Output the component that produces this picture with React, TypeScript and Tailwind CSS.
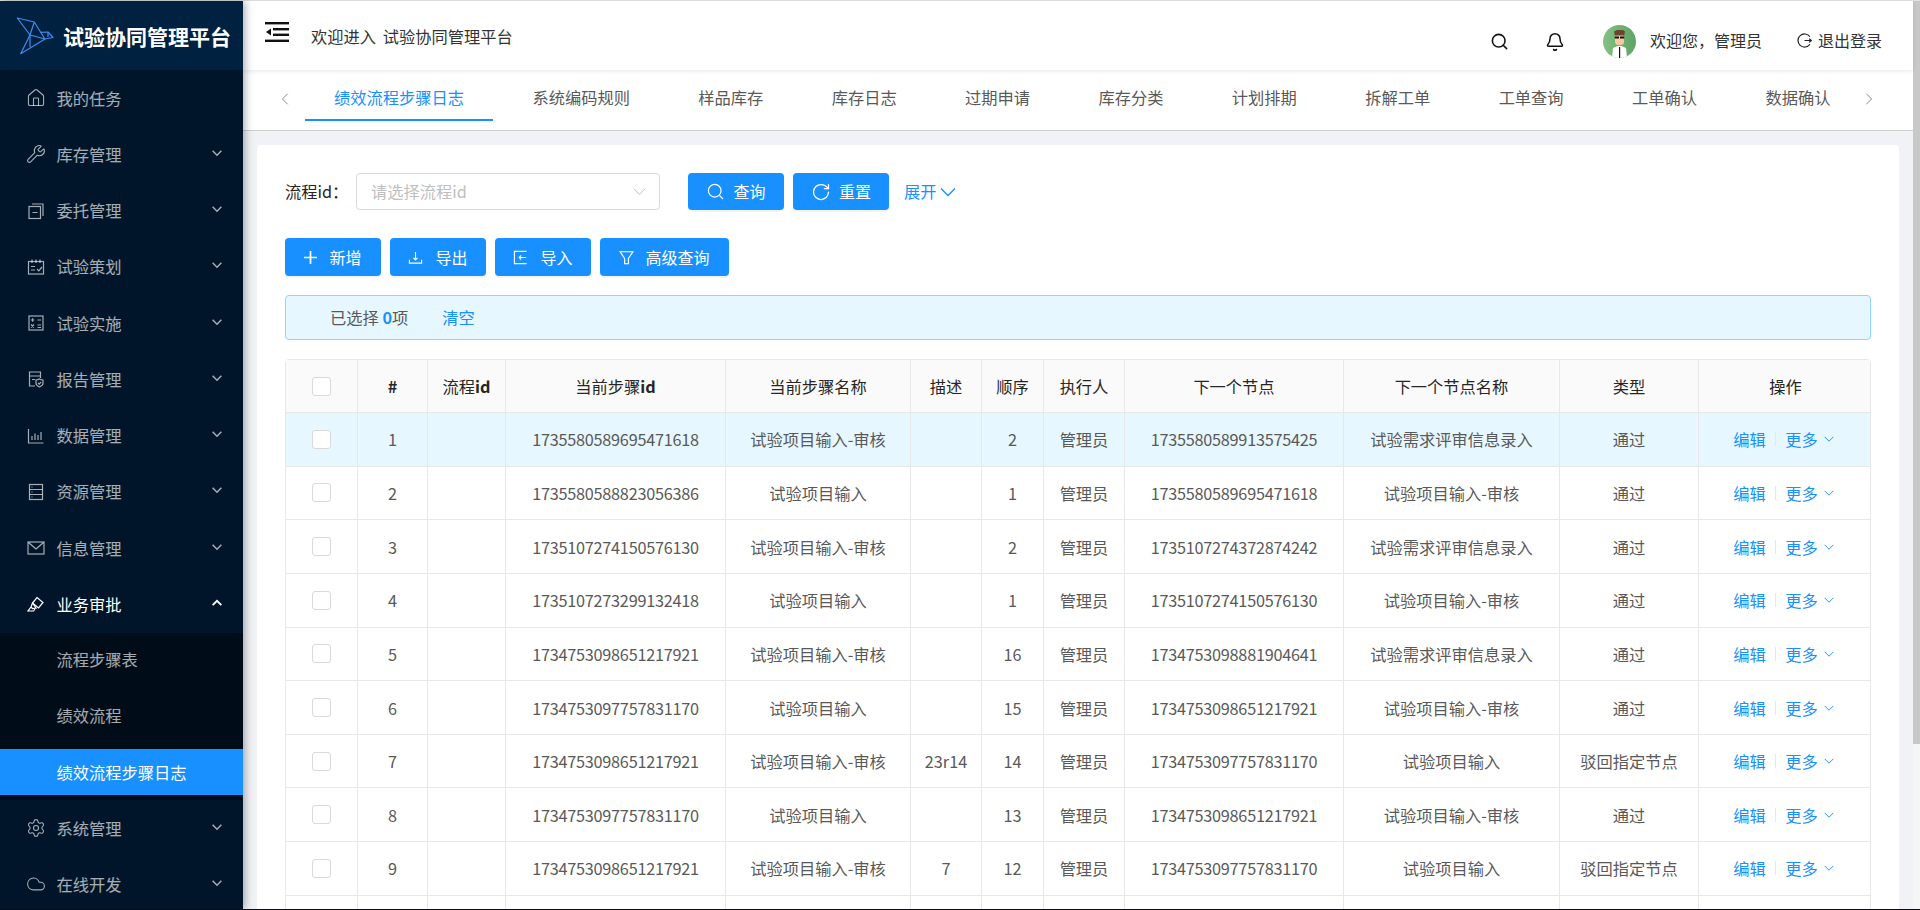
import React from "react";
import { RotateCw, Settings, Cloud, Bell, House, Wrench, Search } from "lucide-react";

type IconP = { className?: string };
const S = ({ children, className }: { children: React.ReactNode; className?: string }) => (
  <svg viewBox="0 0 18 18" fill="none" stroke="currentColor" strokeWidth="1.2" className={className}>
    {children}
  </svg>
);

const Chev = ({ className, d = "M1 4.5l7 7 7-7", sw = 1.2 }: { className?: string; d?: string; sw?: number }) => (
  <svg viewBox="0 0 16 16" fill="none" stroke="currentColor" strokeWidth={sw} className={`shrink-0 ${className ?? ""}`}>
    <path d={d} />
  </svg>
);
const UP = "M1 11.5l7-7 7 7";
const LEFT = "M11.5 1l-7 7 7 7";
const RIGHT = "M4.5 1l7 7-7 7";

const CopyMinusI = ({ className }: IconP) => (
  <S className={className}>
    <rect x="2" y="4.5" width="11.5" height="12" />
    <path d="M5 2h11v12M5.5 10.5h5" />
  </S>
);
const PlanI = ({ className }: IconP) => (
  <S className={className}>
    <rect x="1.5" y="3.5" width="15" height="12.5" />
    <path d="M5 1.5v3.5M9 1.5v3.5M13 1.5v3.5M4 8.5h4M4 12h4M10 11l1.8 1.8L15 9" />
  </S>
);
const CalcI = ({ className }: IconP) => (
  <S className={className}>
    <rect x="2" y="2" width="14" height="14" />
    <path d="M3.8 6h3.6M5.6 4.2v3.6M10.5 6h3.6M4 10.5l3 3M7 10.5l-3 3M10.5 11h3.6M10.5 13.5h3.6" />
  </S>
);
const ReportI = ({ className }: IconP) => (
  <S className={className}>
    <path d="M8 16H2.5V2h11v6M2.5 6h11M5 9.5h3" />
    <path d="M12.5 9l3.5 1.2v3c0 1.8-1.5 2.8-3.5 3.8-2-1-3.5-2-3.5-3.8v-3z" />
    <path d="M11 13l1.2 1.2L14 12" />
  </S>
);
const DataI = ({ className }: IconP) => (
  <S className={className}>
    <path d="M1.5 2v14h15M5 13V9M8 13V6.5M11 13V8M14 13V5" />
  </S>
);
const ServerI = ({ className }: IconP) => (
  <S className={className}>
    <rect x="2.5" y="1.5" width="13" height="15" />
    <path d="M2.5 6.5h13M2.5 11.5h13M4.5 4h1M4.5 9h1M4.5 14h1" />
  </S>
);
const MailI = ({ className }: IconP) => (
  <S className={className}>
    <rect x="1" y="3" width="16" height="12" />
    <path d="M1.5 3.5L9 10l7.5-6.5" />
  </S>
);
const HighlightI = ({ className }: IconP) => (
  <S className={className}>
    <path d="M10 2.5l6 5-4.5 5.5-6-5z" />
    <path d="M5.5 8l-1.5 4 1.5 1.5 3.5-.5z" />
    <path d="M4 12l-3 4h5.5l1.5-2" />
  </S>
);

const Logo = () => (
  <svg viewBox="16 18 40 40" className="w-[40px] h-[40px] shrink-0" fill="none" stroke="#3f8cf0" strokeWidth="1.2" strokeLinejoin="round">
    <path d="M17.3 20L34.3 24L40.7 34.3L48 34L53 39.5L45 41L20.7 55.7L30 37L17.3 20Z" />
    <path d="M34.3 24L30 37L30 49M30 37L45 41L40.7 34.3M48 34V39" />
  </svg>
);

const Hamburger = () => (
  <svg viewBox="0 0 24 20" className="w-[24px] h-[20px]">
    <rect x="0" y="0" width="24" height="2.4" fill="#111" />
    <rect x="0" y="17.6" width="24" height="2.4" fill="#111" />
    <rect x="8" y="6" width="16" height="2.4" fill="#111" />
    <rect x="8" y="11.6" width="16" height="2.4" fill="#111" />
    <path d="M1 10l5-3.6v7.2z" fill="#111" />
  </svg>
);

const Avatar = () => (
  <svg viewBox="0 0 33 33" className="w-[33px] h-[33px] shrink-0">
    <defs>
      <clipPath id="avc"><circle cx="16.5" cy="16.5" r="16.5" /></clipPath>
      <linearGradient id="avg" x1="0" x2="1" y1="0" y2="0">
        <stop offset="0" stopColor="#84c084" />
        <stop offset="1" stopColor="#5fa364" />
      </linearGradient>
    </defs>
    <g clipPath="url(#avc)">
      <rect width="33" height="33" fill="url(#avg)" />
      <path d="M9 33l1-10 4.5-2h4l4.5 2 1 10z" fill="#fff" />
      <path d="M16 22h1.2v11H16z" fill="#111" />
      <rect x="12" y="9" width="9" height="11" rx="3.5" fill="#f6c9a4" />
      <path d="M11 6.5l3-1.5h6l2 1.5-.8 4h-9.4z" fill="#6b4530" />
      <path d="M11.8 11.5h4.2v2h-4.2zM17 11.5h4.2v2H17z" fill="#111" />
    </g>
  </svg>
);

const PlusI = () => (
  <svg viewBox="0 0 14 14" className="w-[13px] h-[13px]" fill="none" stroke="currentColor" strokeWidth="1.8">
    <path d="M7 0v14M0 7h14" />
  </svg>
);
const ExportI = () => (
  <svg viewBox="0 0 16 16" className="w-[15px] h-[15px]" fill="none" stroke="currentColor" strokeWidth="1.2">
    <path d="M1.5 10.5v3.5h13v-3.5M8 2v8.5M5.8 8.3L8 10.5l2.2-2.2" />
  </svg>
);
const ImportI = () => (
  <svg viewBox="0 0 16 16" className="w-[15px] h-[15px]" fill="none" stroke="currentColor" strokeWidth="1.2">
    <path d="M14.5 1.5h-13v13h13M14 8H6.5M8.7 5.8L6.5 8l2.2 2.2" />
  </svg>
);
const FilterI = () => (
  <svg viewBox="0 0 16 16" className="w-[15px] h-[15px]" fill="none" stroke="currentColor" strokeWidth="1.2">
    <path d="M1 1.8h14L10 9v5.5H6V9z" />
  </svg>
);
const LogoutI = () => (
  <svg viewBox="0 0 16 16" className="w-[15px] h-[15px]" fill="none" stroke="#222" strokeWidth="1.3">
    <path d="M13.8 4A7 7 0 1 0 13.8 12M8 8h7.2M13 6l2.2 2-2.2 2" />
  </svg>
);

const Btn = ({ icon, label, w, gap = "gap-[12px]" }: { icon: React.ReactNode; label: string; w: string; gap?: string }) => (
  <button className={`${w} ${gap} h-full flex items-center justify-center rounded-[4px] bg-[#1890ff] text-white text-[16px] shadow-[0_2px_0_rgba(0,0,0,0.045)]`}>
    {icon}
    <span className="mb-[1px]">{label}</span>
  </button>
);

type Menu = { label: string; Icon: React.ComponentType<IconP> };
const Lu = (C: React.ComponentType<{ className?: string; strokeWidth?: number }>) => ({ className }: IconP) => (
  <C className={`${className ?? ""} scale-[1.12]`} strokeWidth={1.3} />
);
const menuTop: Menu[] = [
  { label: "库存管理", Icon: Lu(Wrench) },
  { label: "委托管理", Icon: CopyMinusI },
  { label: "试验策划", Icon: PlanI },
  { label: "试验实施", Icon: CalcI },
  { label: "报告管理", Icon: ReportI },
  { label: "数据管理", Icon: DataI },
  { label: "资源管理", Icon: ServerI },
  { label: "信息管理", Icon: MailI },
];
const HomeI = Lu(House);
const menuBottom: Menu[] = [
  { label: "系统管理", Icon: Lu(Settings) },
  { label: "在线开发", Icon: Lu(Cloud) },
];

const tabs = ["系统编码规则", "样品库存", "库存日志", "过期申请", "库存分类", "计划排期", "拆解工单", "工单查询", "工单确认", "数据确认"];

const cols = "grid grid-cols-[72px_70px_78px_220px_185px_71px_62px_81px_219px_216px_139px_173px]";
const Id = () => <span className="font-semibold">id</span>;
const heads: React.ReactNode[] = [
  "",
  <span className="font-semibold">#</span>,
  <>流程<Id /></>,
  <>当前步骤<Id /></>,
  "当前步骤名称",
  "描述",
  "顺序",
  "执行人",
  "下一个节点",
  "下一个节点名称",
  "类型",
  "操作",
];

const A = "试验项目输入-审核";
const B = "试验项目输入";
const C = "试验需求评审信息录入";
const P = "通过";
const R = "驳回指定节点";
const rows: [string, string, string, string, string, string, string][] = [
  ["1735580589695471618", A, "", "2", "1735580589913575425", C, P],
  ["1735580588823056386", B, "", "1", "1735580589695471618", A, P],
  ["1735107274150576130", A, "", "2", "1735107274372874242", C, P],
  ["1735107273299132418", B, "", "1", "1735107274150576130", A, P],
  ["1734753098651217921", A, "", "16", "1734753098881904641", C, P],
  ["1734753097757831170", B, "", "15", "1734753098651217921", A, P],
  ["1734753098651217921", A, "23r14", "14", "1734753097757831170", B, R],
  ["1734753097757831170", B, "", "13", "1734753098651217921", A, P],
  ["1734753098651217921", A, "7", "12", "1734753097757831170", B, R],
];

const Cell = ({ children, className = "" }: { children?: React.ReactNode; className?: string }) => (
  <div className={`flex items-center justify-center border-r border-[#e8e8e8] last:border-r-0 whitespace-nowrap ${className}`}>{children}</div>
);
const Check = () => <div className="w-[19px] h-[19px] rounded-[3px] border border-[#d9d9d9] bg-white" />;

const MenuItem = ({ m, open }: { m: Menu; open?: boolean }) => (
  <div className={`h-[46px] flex items-center pl-[27px] pr-[21px] ${open ? "text-white" : "text-white/65"}`}>
    <m.Icon className="w-[18px] h-[18px] shrink-0" />
    <span className="ml-[11.5px] flex-1 mb-[1px]">{m.label}</span>
    {open ? <Chev d={UP} className="w-[10px] h-[10px] mb-[3px]" sw={3} /> : <Chev className="w-[10px] h-[10px] mb-[3px]" sw={2.4} />}
  </div>
);

export default function App() {
  return (
    <div className="w-[1920px] h-[910px] overflow-hidden flex flex-col bg-white text-[16.25px] leading-[24px] font-['Noto_Sans_CJK_SC','Noto_Sans',sans-serif]">
      <div className="h-px bg-[#e2e2e2] shrink-0" />
      <div className="flex flex-1 min-h-0">
        <aside className="w-[243px] shrink-0 bg-[#001529] relative z-20 shadow-[2px_0_8px_rgba(0,21,41,0.35)] flex flex-col">
          <div className="h-[69px] bg-[#002140] flex items-center pl-[16px] gap-[7px] shrink-0">
            <Logo />
            <span className="text-white font-bold text-[21px] whitespace-nowrap">试验协同管理平台</span>
          </div>
          <nav className="pt-[5px] flex flex-col">
            <div className="mb-[10.25px] h-[46px] flex items-center pl-[27px] text-white/65">
              <HomeI className="w-[18px] h-[18px] shrink-0" />
              <span className="ml-[11.5px] mb-[1px]">我的任务</span>
            </div>
            {menuTop.map((m) => (
              <div key={m.label} className="mb-[10.25px]">
                <MenuItem m={m} />
              </div>
            ))}
            <div className="mb-[5.5px]">
              <MenuItem m={{ label: "业务审批", Icon: HighlightI }} open />
            </div>
            <div className="bg-[#000c17] pt-[4px] pb-[5px] mb-[5.5px] flex flex-col gap-[10px]">
              <div className="h-[46px] flex items-center pl-[56.5px] pb-[2px] text-white/65">流程步骤表</div>
              <div className="h-[46px] flex items-center pl-[56.5px] pb-[2px] text-white/65">绩效流程</div>
              <div className="h-[46px] flex items-center pl-[56.5px] text-white bg-[#1890ff]">绩效流程步骤日志</div>
            </div>
            {menuBottom.map((m) => (
              <div key={m.label} className="mb-[10px]">
                <MenuItem m={m} />
              </div>
            ))}
          </nav>
        </aside>

        <main className="flex-1 min-w-0 flex flex-col bg-[#f0f2f5]">
          <header className="h-[69px] shrink-0 bg-white relative z-10 shadow-[0_1px_4px_rgba(0,21,41,0.1)] flex items-start">
            <div className="pt-[21px] pl-[22px]">
              <Hamburger />
            </div>
            <div className="pt-[23px] pl-[22px] text-[#333] whitespace-nowrap [word-spacing:3px]">欢迎进入 试验协同管理平台</div>
            <div className="ml-auto pt-[24px] pr-[31px] flex items-center h-[57px] text-[#333] text-[16px]">
              <Search className="w-[19px] h-[19px] text-[#111]" strokeWidth={2} />
              <Bell className="w-[20px] h-[20px] ml-[36px] text-[#111]" strokeWidth={1.8} />
              <div className="ml-[38px]">
                <Avatar />
              </div>
              <span className="ml-[14px] mb-[3px]">欢迎您，管理员</span>
              <div className="ml-[35px] mb-[2px]">
                <LogoutI />
              </div>
              <span className="ml-[6px] mb-[3px]">退出登录</span>
            </div>
          </header>

          <div className="h-[61px] shrink-0 bg-white border-b border-[#d0d0d0] flex items-start">
            <div className="w-[62px] shrink-0 pl-[36px] h-[57px] flex items-center">
              <Chev d={LEFT} className="w-[12px] h-[12px] text-[#888]" sw={1.3} />
            </div>
            <div className="flex-1 min-w-0 overflow-hidden flex pt-[6px] text-[#595959]">
              <div className="shrink-0 h-[45px] flex items-center px-[29px] mr-[10.4px] pb-[2px] border-b-2 border-[#1890ff] text-[#1890ff]">绩效流程步骤日志</div>
              {tabs.map((t) => (
                <div key={t} className="shrink-0 h-[45px] flex items-center px-[29px] mr-[10.4px] pb-[3px] whitespace-nowrap">
                  {t}
                </div>
              ))}
            </div>
            <div className="w-[54px] shrink-0 pl-[4px] h-[57px] flex items-center">
              <Chev d={RIGHT} className="w-[12px] h-[12px] text-[#888]" sw={1.3} />
            </div>
          </div>

          <div className="flex-1 min-h-0 overflow-hidden px-[14px] pt-[14px]">
            <div className="bg-white rounded-t-[4px] px-[28px] pt-[28px] h-full overflow-hidden">
              <div className="flex items-center h-[37px]">
                <span className="w-[71px] shrink-0 text-[#262626] mb-[1px]">流程id：</span>
                <div className="w-[304px] h-full rounded-[4px] border border-[#d9d9d9] flex items-center pl-[14px] pr-[13px] text-[#bfbfbf]">
                  <span className="flex-1 mb-[1px]">请选择流程id</span>
                  <Chev className="w-[13px] h-[13px]" sw={1.2} />
                </div>
                <div className="ml-[28px] flex gap-[9px] h-full">
                  <Btn w="w-[96px]" gap="gap-[8px]" label="查询" icon={<Search className="w-[19px] h-[19px]" strokeWidth={1.5} />} />
                  <Btn w="w-[96px]" gap="gap-[8px]" label="重置" icon={<RotateCw className="w-[20px] h-[20px]" strokeWidth={1.5} />} />
                </div>
                <span className="ml-[15px] text-[#1890ff] flex items-center gap-[3px]">
                  <span className="mb-[1px]">展开</span>
                  <Chev className="w-[16px] h-[16px]" sw={1.4} />
                </span>
              </div>

              <div className="mt-[28px] flex gap-[9px] h-[38px]">
                <Btn w="w-[96px]" label="新增" icon={<PlusI />} />
                <Btn w="w-[96px]" label="导出" icon={<ExportI />} />
                <Btn w="w-[96px]" label="导入" icon={<ImportI />} />
                <Btn w="w-[129px]" gap="gap-[11px]" label="高级查询" icon={<FilterI />} />
              </div>

              <div className="mt-[19px] h-[45px] rounded-[4px] border border-[#91d5ff] bg-[#e6f7ff] flex items-center pl-[44px] text-[#595959]">
                <span className="mb-[1px]">
                  已选择 <span className="text-[#1890ff] font-semibold">0</span>项
                </span>
                <span className="ml-[34px] mb-[1px] text-[#1890ff]">清空</span>
              </div>

              <div className="mt-[19px] border border-[#e8e8e8] rounded-t-[4px] text-[#595959] w-[1586px]">
                <div className={`${cols} h-[53px] bg-[#fafafa] border-b border-[#e8e8e8] text-[#262626]`}>
                  {heads.map((h, i) => (
                    <Cell key={i}>{i === 0 ? <Check /> : h}</Cell>
                  ))}
                </div>
                {rows.map((r, i) => (
                  <div key={i} className={`${cols} h-[53.65px] border-b border-[#e8e8e8] ${i === 0 ? "bg-[#e6f7ff]" : "bg-white"}`}>
                    <Cell>
                      <Check />
                    </Cell>
                    <Cell>{i + 1}</Cell>
                    <Cell />
                    <Cell className="tracking-[-0.25px]">{r[0]}</Cell>
                    <Cell>{r[1]}</Cell>
                    <Cell>{r[2]}</Cell>
                    <Cell>{r[3]}</Cell>
                    <Cell>管理员</Cell>
                    <Cell className="tracking-[-0.25px]">{r[4]}</Cell>
                    <Cell>{r[5]}</Cell>
                    <Cell>{r[6]}</Cell>
                    <Cell className="text-[#1890ff] pr-[4px]">
                      <span>编辑</span>
                      <span className="w-px h-[14px] bg-[#e8e8e8] mx-[9.25px]" />
                      <span>更多</span>
                      <Chev className="w-[10px] h-[10px] ml-[6px]" sw={1.5} />
                    </Cell>
                  </div>
                ))}
                <div className={`${cols} h-[53.65px]`}>
                  {heads.map((_, i) => (
                    <Cell key={i} />
                  ))}
                </div>
              </div>
            </div>
          </div>
        </main>

        <div className="w-[7px] shrink-0 bg-[#f5f5f5] flex flex-col">
          <div className="h-[743px] bg-[#c8c8c8]" />
        </div>
      </div>
      <div className="h-px bg-[#0b0b14] shrink-0" />
    </div>
  );
}
